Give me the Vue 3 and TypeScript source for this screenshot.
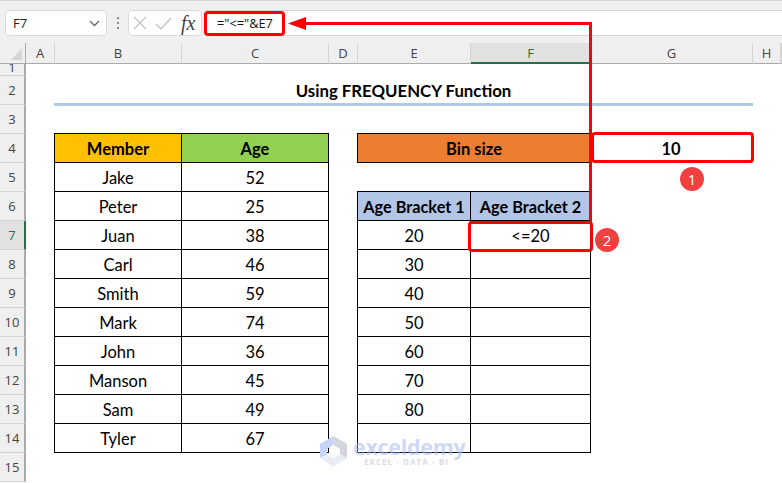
<script setup lang="ts">
interface Cell {
  col: number
  row: number
  span?: number
  text: string
  kind?: string
}

const columns = ['A', 'B', 'C', 'D', 'E', 'F', 'G', 'H', '']
const rowNumbers = Array.from({ length: 15 }, (_, i) => i + 1)

const members: [string, number][] = [
  ['Jake', 52], ['Peter', 25], ['Juan', 38], ['Carl', 46], ['Smith', 59],
  ['Mark', 74], ['John', 36], ['Manson', 45], ['Sam', 49], ['Tyler', 67],
]
const brackets = ['20', '30', '40', '50', '60', '70', '80', '']

const cells: Cell[] = [
  { col: 2, row: 4, text: 'Member', kind: 'member' },
  { col: 3, row: 4, text: 'Age', kind: 'age' },
  { col: 5, row: 4, span: 2, text: 'Bin size', kind: 'bin' },
  { col: 5, row: 6, text: 'Age Bracket 1', kind: 'bracket' },
  { col: 6, row: 6, text: 'Age Bracket 2', kind: 'bracket' },
]
members.forEach(([name, age], i) => {
  cells.push({ col: 2, row: 5 + i, text: name })
  cells.push({ col: 3, row: 5 + i, text: String(age) })
})
brackets.forEach((v, i) => {
  cells.push({ col: 5, row: 7 + i, text: v })
  cells.push({ col: 6, row: 7 + i, text: i === 0 ? '<=20' : '' })
})

function place(c: Cell) {
  return {
    gridColumn: `${c.col + 1} / span ${c.span ?? 1}`,
    gridRow: `${c.row + 1}`,
  }
}
</script>

<template>
  <div class="app">
    <div class="toolbar">
      <div class="namebox">
        <span>F7</span>
        <svg width="11" height="7" viewBox="0 0 11 7"><path d="M1 1l4.5 4.5L10 1" fill="none" stroke="#666" stroke-width="1.3" /></svg>
      </div>
      <div class="dots"><i></i><i></i><i></i></div>
      <div class="fxbox">
        <svg width="14" height="14" viewBox="0 0 14 14"><path d="M1 1l12 12M13 1L1 13" fill="none" stroke="#c4c4c4" stroke-width="1.3" /></svg>
        <svg width="17" height="13" viewBox="0 0 17 13"><path d="M1 7l5 5L16 1" fill="none" stroke="#c4c4c4" stroke-width="1.3" /></svg>
        <span class="fx">fx</span>
      </div>
      <div class="formula"><span>="&lt;="&amp;E7</span></div>
    </div>

    <div class="sheet">
      <div class="corner">
        <svg width="12" height="14" viewBox="0 0 12 14"><path d="M11 1v12H0z" fill="#d6d6d6" /></svg>
      </div>
      <div
        v-for="c in columns"
        :key="c"
        class="colhead"
        :class="{ active: c === 'F' }"
      >{{ c }}</div>

      <div
        v-for="r in rowNumbers"
        :key="r"
        class="rowhead"
        :class="{ active: r === 7, clipped: r === 1 }"
        :style="{ gridRow: r + 1 }"
      ><span>{{ r }}</span></div>

      <div class="title">Using FREQUENCY Function</div>

      <div
        v-for="c in cells"
        :key="`${c.col}-${c.row}`"
        class="cell"
        :class="c.kind"
        :style="place(c)"
      >{{ c.text }}</div>

      <div class="binvalue">10</div>
    </div>

    <div class="hl hl-formula"></div>
    <div class="hl hl-bin"></div>
    <div class="hl hl-f7"></div>

    <svg class="arrow" width="782" height="483" viewBox="0 0 782 483">
      <path d="M590.5 222V23.5H300" fill="none" stroke="#fe0000" stroke-width="3" />
      <path d="M288 23.5l18-6.5v13z" fill="#fe0000" />
    </svg>

    <div class="badge badge-1">1</div>
    <div class="badge badge-2">2</div>

    <div class="mark">
      <svg class="marklogo" width="28" height="32" viewBox="0 0 28 32">
        <path d="M0 8L13.500 0v9L7 13v6l-7 3z" fill="#c6d5f7" />
        <path d="M13.500 0L27 8v14l-7-4v-5l-6.500-4z" fill="#d2d6dc" />
        <path d="M0 22l7-3 6.500 3 6.500-4 7 4-13.500 9z" fill="#e9eef5" />
      </svg>
      <div class="marktext">
        <div class="markname">exceldemy</div>
        <div class="marksub">EXCEL - DATA - BI</div>
      </div>
    </div>
  </div>
</template>

<style>
html, body { margin: 0; background: #fff; }
</style>

<style scoped>
.app {
  position: relative;
  width: 782px;
  height: 483px;
  overflow: hidden;
  background: #fff;
  font-family: "Lato", "Liberation Sans", sans-serif;
  color: #000;
}
.toolbar {
  box-sizing: border-box;
  height: 43px;
  display: flex;
  align-items: flex-start;
  padding: 9px 0 0 5px;
  background: #f0f0f0;
  border-top: 1px solid #d4d4d4;
}
.namebox {
  box-sizing: border-box;
  width: 102px;
  height: 26px;
  display: flex;
  align-items: center;
  justify-content: space-between;
  padding: 0 6px 0 7px;
  background: #fff;
  border: 1px solid #dadada;
  border-radius: 4px;
  font: 13px "Open Sans", sans-serif;
  color: #222;
}
.dots {
  width: 21px;
  height: 26px;
  display: flex;
  flex-direction: column;
  align-items: center;
  justify-content: center;
  gap: 3px;
}
.dots i {
  width: 2px;
  height: 2px;
  background: #8a8a8a;
}
.fxbox {
  box-sizing: border-box;
  width: 74px;
  height: 26px;
  display: flex;
  align-items: center;
  gap: 8px;
  padding-left: 4px;
  background: #fff;
  border: 1px solid #dadada;
  border-radius: 4px;
}
.fx {
  margin-left: 1px;
  font: italic 20px "Liberation Serif", serif;
  color: #444;
}
.formula {
  box-sizing: border-box;
  flex: 1;
  height: 26px;
  margin-left: 4px;
  padding-left: 11px;
  display: flex;
  align-items: center;
  background: #fff;
  border-top: 1px solid #d4d4d4;
  border-bottom: 1px solid #d4d4d4;
  font: 12.800px "Open Sans", sans-serif;
  color: #111;
}
.sheet {
  display: grid;
  grid-template-columns: 26px 29px 127px 147px 29px 113px 120px 162px 28px 1fr;
  grid-template-rows: 21px 12px repeat(14, 29px);
}
.corner {
  grid-row: 1;
  grid-column: 1;
  box-sizing: border-box;
  display: flex;
  align-items: flex-end;
  justify-content: flex-end;
  padding: 0 2px 2px 0;
  background: #efefef;
  border-bottom: 1px solid #ababab;
  border-right: 1px solid #ababab;
}
.colhead {
  grid-row: 1;
  box-sizing: border-box;
  display: flex;
  align-items: center;
  justify-content: center;
  background: #efefef;
  border-bottom: 1px solid #ababab;
  border-right: 1px solid #d4d4d4;
  font: 13px "Open Sans", sans-serif;
  color: #444;
}
.colhead.active {
  background: #e1e1e1;
  border-bottom: 2px solid #217346;
  color: #217346;
}
.rowhead {
  grid-column: 1;
  box-sizing: border-box;
  display: flex;
  align-items: center;
  justify-content: center;
  overflow: hidden;
  background: #efefef;
  border-bottom: 1px solid #d4d4d4;
  border-right: 2px solid #ababab;
  font: 13px "Open Sans", sans-serif;
  color: #444;
}
.rowhead.clipped {
  align-items: flex-end;
}
.rowhead.clipped span {
  display: block;
  line-height: 17px;
  height: 17px;
  margin-bottom: -1px;
}
.rowhead.active {
  background: #e1e1e1;
  border-right: 2px solid #217346;
  color: #217346;
}
.title {
  grid-row: 3;
  grid-column: 3 / span 6;
  box-sizing: border-box;
  margin-left: -1px;
  display: flex;
  align-items: center;
  justify-content: center;
  padding-top: 1px;
  border-bottom: 3px solid #aecae6;
  height: 30px;
  font-weight: 700;
  font-size: 16.800px;
}
.cell {
  box-sizing: border-box;
  margin: -1px 0 0 -1px;
  padding-top: 1px;
  display: flex;
  align-items: center;
  justify-content: center;
  border: 1px solid #000;
  font-size: 16.500px;
  white-space: nowrap;
}
.member, .age, .bin, .bracket {
  font-weight: 700;
}
.bracket { font-size: 16.300px; }
.member { background: #ffc000; }
.age { background: #92d050; }
.bin { background: #ed7d31; }
.bracket { background: #b4c6e7; }
.binvalue {
  grid-row: 5;
  grid-column: 8;
  display: flex;
  align-items: center;
  justify-content: center;
  padding-right: 2px;
  font-weight: 700;
  font-size: 16.500px;
}
.hl {
  position: absolute;
  box-sizing: border-box;
  border: 3px solid #fe0000;
  border-radius: 4px;
}
.hl-formula { left: 204px; top: 11px; width: 81px; height: 25px; }
.hl-bin { left: 591px; top: 132px; width: 163px; height: 31px; }
.hl-f7 { left: 468px; top: 221px; width: 125px; height: 31px; }
.arrow {
  position: absolute;
  left: 0;
  top: 0;
  pointer-events: none;
}
.badge {
  position: absolute;
  width: 24px;
  height: 24px;
  border-radius: 50%;
  display: flex;
  align-items: center;
  justify-content: center;
  background: #f04040;
  color: #fff;
  font: 15px "Open Sans", sans-serif;
}
.badge-1 { left: 680px; top: 167px; }
.badge-2 { left: 595px; top: 228px; }
.mark {
  position: absolute;
  left: 320px;
  top: 436px;
  display: flex;
  gap: 5px;
}
.marklogo { flex: none; }
.marktext { margin-top: 0; }
.markname {
  font: 700 21.500px/21px "Open Sans", sans-serif;
  color: rgba(170, 190, 238, 0.6);
  letter-spacing: -0.3px;
  white-space: nowrap;
}
.marksub {
  padding-left: 11px;
  font: 700 8px/9px "Open Sans", sans-serif;
  letter-spacing: 1.050px;
  color: #d9dde3;
  white-space: nowrap;
}
</style>
